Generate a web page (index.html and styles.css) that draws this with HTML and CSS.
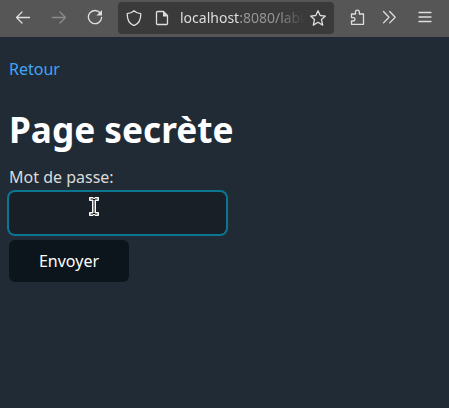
FILE: index.html
```html
<!DOCTYPE html>
<html lang="fr">
<head>
<meta charset="utf-8">
<title>Page secrète</title>
<link rel="stylesheet" href="styles.css">
</head>
<body>
<header class="toolbar">
  <svg class="icon back" viewBox="0 0 16 16"><path d="M14.500 8.500H1.500M7 3L1.500 8.500L7 14"/></svg>
  <svg class="icon forward" viewBox="0 0 16 16"><path d="M1.500 8.500H14.500M9 3l5.500 5.500L9 14"/></svg>
  <svg class="icon reload" viewBox="0 0 16 16"><path d="M13.200 4A6.600 6.600 0 1 0 14.600 8.500"/><path class="solid" d="M15 1v5.600H9.400z"/></svg>
  <div class="urlbar">
    <svg class="icon shield" viewBox="0 0 16 16"><path d="M8 .7C6 2.700 3.800 3.400 1.200 3.700C1.200 9.500 3.400 14 8 15.600C12.600 14 14.800 9.500 14.800 3.700C12.200 3.400 10 2.700 8 .7z"/></svg>
    <svg class="icon doc" viewBox="0 0 16 16"><path d="M3.500 1.500H9.500L13.500 5.500V13.500a1 1 0 0 1-1 1H3.500a1 1 0 0 1-1-1V2.500a1 1 0 0 1 1-1z"/><path class="solid" d="M9 1.500l5 5H9z"/></svg>
    <span class="url">localhost<span class="path">:8080/lab0</span></span>
    <svg class="icon star" viewBox="0 0 16 16"><path d="M8 .8l2.200 4.700 5.200.6-3.900 3.500 1.200 5.500L8 12.300l-4.700 2.800 1.200-5.500L.6 6.100l5.200-.6z"/></svg>
  </div>
  <svg class="icon puzzle" viewBox="0 0 16 16"><path d="M1.500 5H5.500V3a1.900 1.900 0 0 1 3.800 0V5H13.500V15.300H1.500V12H3.300a1.700 1.700 0 0 0 0-3.400H1.500z"/></svg>
  <svg class="icon more" viewBox="0 0 16 16"><path d="M1.500 2.500l5.500 5.700-5.500 5.700M7.700 2.500l5.500 5.700-5.500 5.700"/></svg>
  <svg class="icon menu" viewBox="0 0 16 16"><path d="M2 3.500H14M2 8H14M2 12.500H14"/></svg>
</header>
<main>
  <a class="back-link" href="#">Retour</a>
  <h1>Page secrète</h1>
  <form>
    <label for="password">Mot de passe:</label>
    <div class="field">
      <input id="password" type="password">
      <svg class="pointer" viewBox="0 0 10 19"><path d="M.5.5h3.500l1 1 1-1h3.500v3H6.500v12h3v3H6l-1-1-1 1H.5v-3h3v-12h-3z"/><path class="stem" d="M1.500 2h2.500l1 1 1-1h2.500M5 3v13M1.500 17h2.500l1-1 1 1h2.500"/></svg>
    </div>
    <button type="button">Envoyer</button>
  </form>
</main>
</body>
</html>
```
FILE: styles.css
```css
* { box-sizing: border-box; }
body {
  margin: 0;
  height: 408px;
  overflow: hidden;
  background: #202b36;
  color: #dbdbdb;
  font-family: "Noto Sans", sans-serif;
  font-size: 16px;
}
.toolbar {
  display: flex;
  align-items: center;
  height: 37px;
  padding: 0 16px 3px 15px;
  background: #565656;
}
.icon {
  flex: none;
  width: 16px;
  height: 16px;
  fill: none;
  stroke: #dedede;
  stroke-width: 1.3;
  stroke-linejoin: round;
  stroke-linecap: round;
}
.icon .solid { fill: #dedede; stroke: none; }
.forward { margin-left: 20px; stroke: #8c8c8c; }
.reload { margin-left: 20px; }
.urlbar {
  display: flex;
  align-items: center;
  flex: none;
  width: 216px;
  height: 32px;
  margin: 2px 0 0 15px;
  padding: 0 8px;
  border-radius: 4px;
  background: #3a3a3a;
}
.doc { margin-left: 12px; }
.url {
  flex: none;
  width: 128px;
  margin-left: 10px;
  margin-right: 2px;
  overflow: hidden;
  white-space: nowrap;
  color: #dedede;
  font-size: 14px;
  line-height: 20px;
  mask-image: linear-gradient(to right, #000 98px, transparent 125px);
}
.path { color: #959595; }
.puzzle { margin-left: 16px; }
.more { margin-left: 16px; }
.menu { margin-left: 19px; }
main { padding: 21px 9px 0; }
.back-link {
  display: block;
  width: max-content;
  line-height: 22px;
  color: #41a5f5;
  text-decoration: none;
}
h1 {
  margin: 24px 0 12px;
  color: #fff;
  font-size: 35.2px;
  line-height: 50px;
  font-weight: 700;
}
label { display: block; line-height: 22px; }
.field {
  position: relative;
  width: 217px;
  height: 42px;
  margin-top: 4px;
}
input {
  display: block;
  width: 100%;
  height: 100%;
  padding: 10px;
  border: 0;
  border-radius: 6px;
  outline: 0;
  background: #181f27;
  box-shadow: 0 0 0 2px #0c7592;
}
.pointer {
  position: absolute;
  left: 80px;
  top: 5px;
  width: 10px;
  height: 19px;
  fill: #fff;
  stroke: #fff;
  stroke-width: 1;
}
.pointer .stem { fill: none; stroke: #000; }
button {
  display: block;
  width: 120px;
  height: 42px;
  margin-top: 6px;
  padding: 0;
  border: 0;
  border-radius: 6px;
  background: #0c151b;
  color: #fff;
  font: inherit;
}
```
